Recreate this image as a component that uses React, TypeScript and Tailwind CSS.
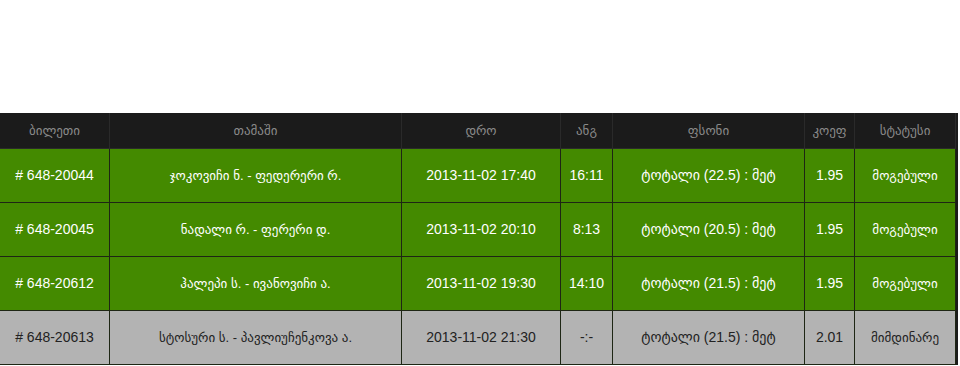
import React from 'react';

interface Bet {
  ticket: string;
  game: string;
  date: string;
  score: string;
  odds: string;
  coef: string;
  status: string;
  won: boolean;
}

const bets: Bet[] = [
  {
    ticket: '# 648-20044',
    game: 'ჯოკოვიჩი ნ. - ფედერერი რ.',
    date: '2013-11-02 17:40',
    score: '16:11',
    odds: 'ტოტალი (22.5) : მეტ',
    coef: '1.95',
    status: 'მოგებული',
    won: true,
  },
  {
    ticket: '# 648-20045',
    game: 'ნადალი რ. - ფერერი დ.',
    date: '2013-11-02 20:10',
    score: '8:13',
    odds: 'ტოტალი (20.5) : მეტ',
    coef: '1.95',
    status: 'მოგებული',
    won: true,
  },
  {
    ticket: '# 648-20612',
    game: 'ჰალეპი ს. - ივანოვიჩი ა.',
    date: '2013-11-02 19:30',
    score: '14:10',
    odds: 'ტოტალი (21.5) : მეტ',
    coef: '1.95',
    status: 'მოგებული',
    won: true,
  },
  {
    ticket: '# 648-20613',
    game: 'სტოსური ს. - პავლიუჩენკოვა ა.',
    date: '2013-11-02 21:30',
    score: '-:-',
    odds: 'ტოტალი (21.5) : მეტ',
    coef: '2.01',
    status: 'მიმდინარე',
    won: false,
  },
];

const headers = ['ბილეთი', 'თამაში', 'დრო', 'ანგ', 'ფსონი', 'კოეფ', 'სტატუსი'];

const gridCols = 'grid grid-cols-[110px_292px_159px_52px_192px_50px_101px]';

const App: React.FC = () => {
  return (
    <div className="w-[960px] h-[366px] bg-white pt-[113px] font-['Liberation_Sans','DejaVu_Sans',sans-serif] overflow-hidden">
      <div className="w-[958px] bg-[#1b1b1b] pr-[3px]">
        {/* header */}
        <div className={gridCols}>
          {headers.map((h) => (
            <div
              key={h}
              className="h-[36px] flex items-center justify-center border-r border-b border-[#2a2a2a] text-[13px] text-[#8a8a8a]"
            >
              {h}
            </div>
          ))}
        </div>

        {/* rows */}
        {bets.map((bet) => {
          const cells = [
            bet.ticket,
            bet.game,
            bet.date,
            bet.score,
            bet.odds,
            bet.coef,
            bet.status,
          ];
          return (
            <div key={bet.ticket} className={gridCols}>
              {cells.map((c, i) => (
                <div
                  key={i}
                  className={`h-[54px] flex items-center justify-center border-r border-b border-[#1e2614] ${
                    i === 1 || i === 6 ? 'text-[13px]' : 'text-[14px]'
                  } ${
                    bet.won
                      ? 'bg-[#448a00] text-white'
                      : 'bg-[#b3b3b3] text-[#222222]'
                  }`}
                >
                  {c}
                </div>
              ))}
            </div>
          );
        })}
      </div>
    </div>
  );
};

export default App;
